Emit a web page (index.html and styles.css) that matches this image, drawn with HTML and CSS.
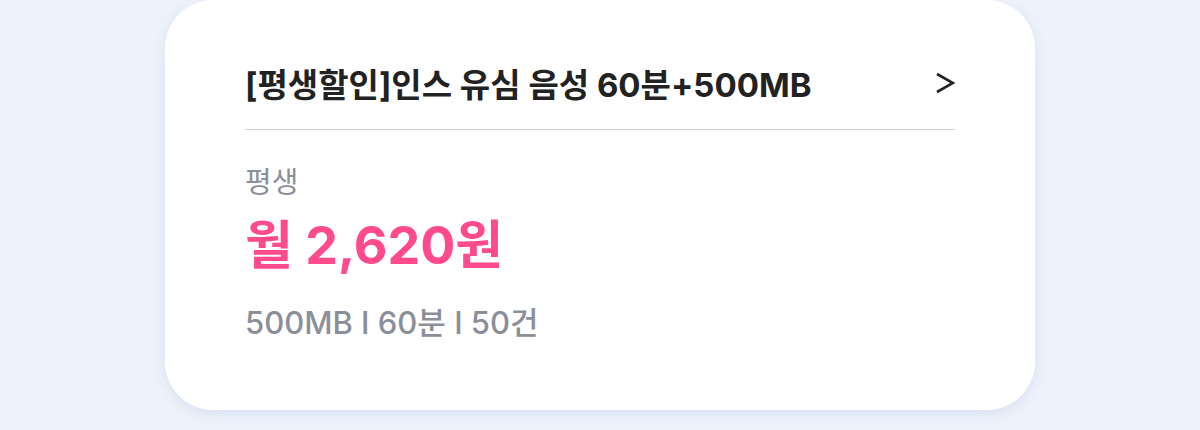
FILE: index.html
```html
<!DOCTYPE html>
<html lang="ko">
<head>
<meta charset="utf-8">
<link rel="stylesheet" href="styles.css">
</head>
<body>
<div class="page">
  <div class="card">
    <div class="head">
      <div class="title">[평생할인]인스 유심 음성 60분+500MB</div>
      <svg class="chev" width="20" height="22" viewBox="0 0 20 22" aria-hidden="true">
        <polyline points="2,2 18,11 2,20" fill="none" stroke="#222" stroke-width="2.6" stroke-linejoin="miter"/>
      </svg>
    </div>
    <div class="body">
      <div class="term">평생</div>
      <div class="price">월 2,620원</div>
      <div class="spec">500MB I 60분 I 50건</div>
    </div>
  </div>
</div>
</body>
</html>
```
FILE: styles.css
```css
html, body { margin: 0; padding: 0; }
body {
  background: #eef2fb;
  font-family: "Inter", "Noto Sans CJK KR", sans-serif;
  width: 1200px;
  height: 430px;
  overflow: hidden;
}
.page {
  display: flex;
  justify-content: center;
}
.card {
  width: 870px;
  height: 410px;
  box-sizing: border-box;
  background: #fff;
  border-radius: 48px;
  box-shadow: 0 4px 12px rgba(200, 208, 235, 0.5);
  padding: 65px 80px 0 80px;
}
.head {
  display: flex;
  justify-content: space-between;
  align-items: center;
  padding-bottom: 24px;
  border-bottom: 1px solid #cfcfd3;
}
.title {
  font-size: 33px;
  font-weight: 700;
  color: #222;
  line-height: 40px;
}
.chev {
  display: block;
  margin-top: -4px;
}
.body { padding-top: 35px; }
.term {
  font-size: 29px;
  color: #8a8f99;
  line-height: 36px;
}
.price {
  font-size: 52px;
  font-weight: 700;
  color: #ff4b8e;
  line-height: 60px;
  margin-top: 15px;
}
.spec {
  font-size: 31px;
  color: #8a8f99;
  font-weight: 500;
  line-height: 40px;
  margin-top: 27px;
}
```
